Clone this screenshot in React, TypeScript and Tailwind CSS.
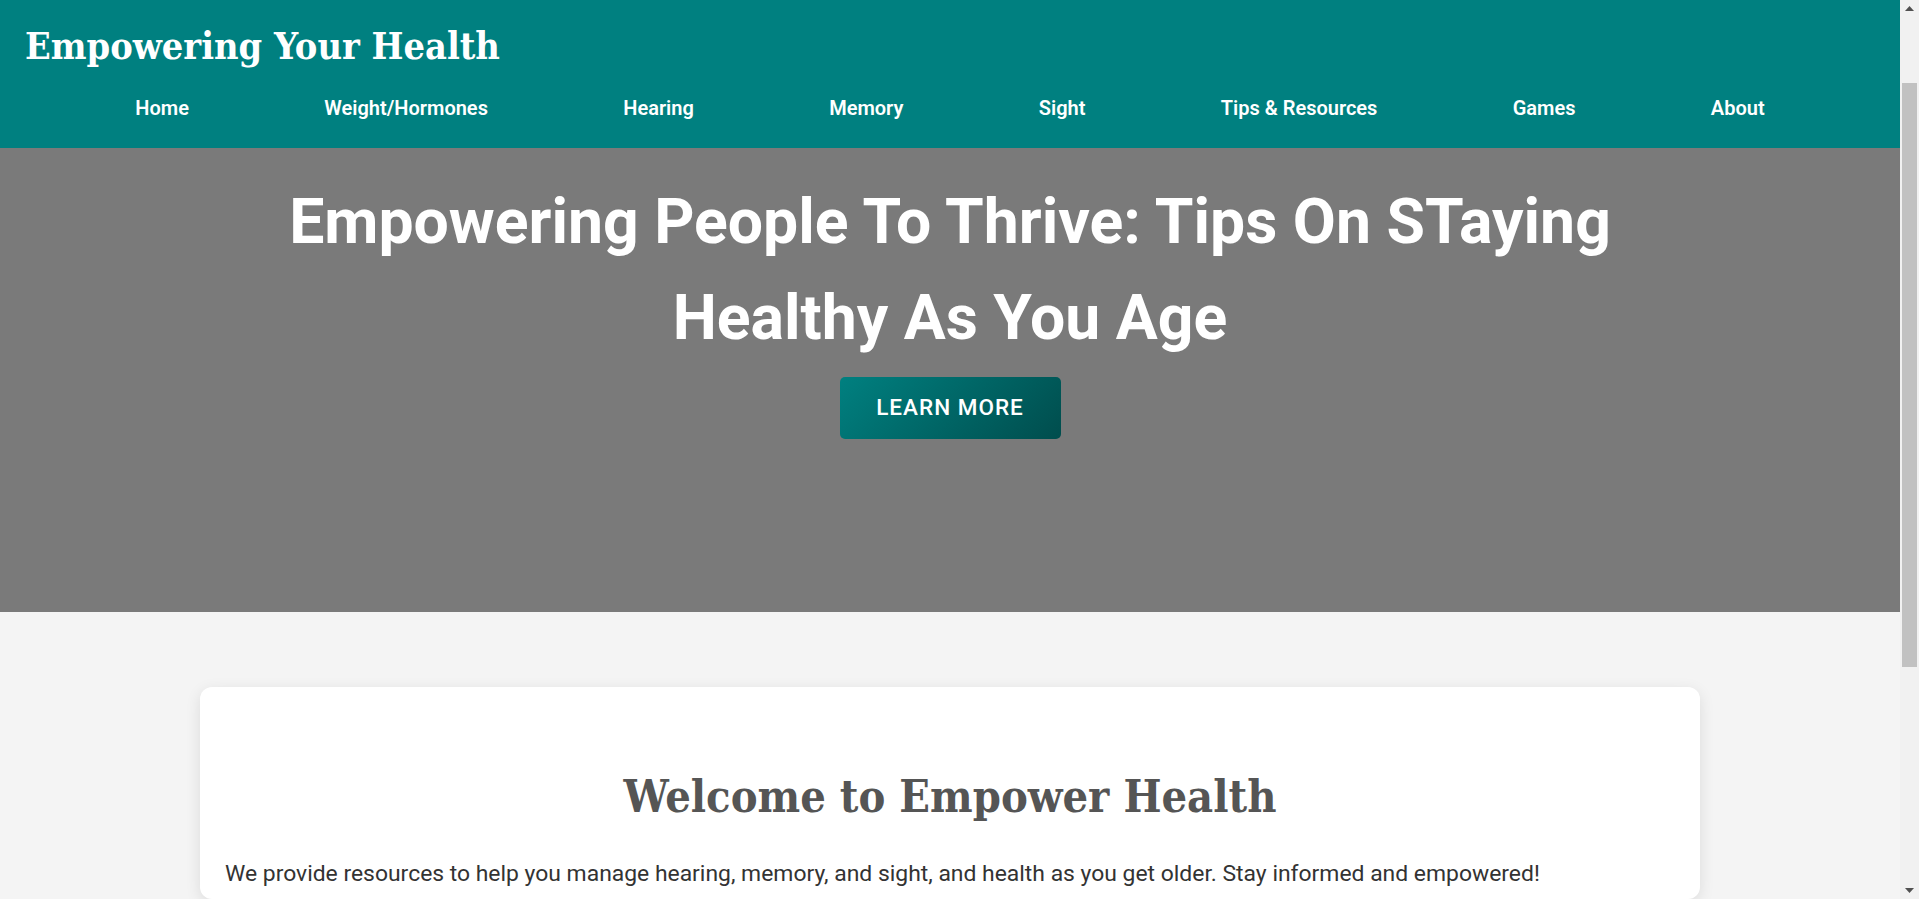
import React from "react";

const navItems = [
  "Home",
  "Weight/Hormones",
  "Hearing",
  "Memory",
  "Sight",
  "Tips & Resources",
  "Games",
  "About",
];

function Scrollbar() {
  return (
    <div className="flex h-full w-[19px] shrink-0 flex-col items-center bg-[#f1f1f1]">
      <div className="flex h-[17px] w-full items-center justify-center">
        <svg width="9" height="5" viewBox="0 0 9 5">
          <polygon points="0,5 9,5 4.5,0" fill="#505050" />
        </svg>
      </div>
      <div className="h-[66px] w-full" />
      <div className="h-[584px] w-[15px] bg-[#c1c1c1]" />
      <div className="flex-1" />
      <div className="flex h-[17px] w-full items-center justify-center">
        <svg width="9" height="5" viewBox="0 0 9 5">
          <polygon points="0,0 9,0 4.5,5" fill="#505050" />
        </svg>
      </div>
    </div>
  );
}

export default function App() {
  return (
    <div className="flex h-screen w-full overflow-hidden bg-[#f4f4f4] font-['Roboto',sans-serif]">
      <div className="flex min-w-0 flex-1 flex-col">
        <header className="flex h-[148px] shrink-0 flex-col bg-[#008080] text-white">
          <h1 className="mt-[22px] pl-[25px] font-['DejaVu_Serif_Condensed','DejaVu_Serif',serif] text-[37.6px] font-bold leading-[48px]">
            Empowering Your Health
          </h1>
          <nav className="mt-[26px] flex justify-evenly">
            {navItems.map((item) => (
              <a
                key={item}
                href="#"
                className="text-[20px] font-semibold leading-[24px] text-white"
              >
                {item}
              </a>
            ))}
          </nav>
        </header>

        <section className="flex h-[464px] shrink-0 flex-col items-center bg-[#7a7a7a]">
          <h2 className="mt-[26px] max-w-[1450px] text-center text-[62.5px] font-bold leading-[96px] text-white">
            Empowering People To Thrive: Tips On STaying Healthy As You Age
          </h2>
          <button className="mt-[11px] h-[62px] w-[221px] rounded-[5px] bg-[linear-gradient(135deg,#008080,#004d4d)] text-[22.5px] font-medium tracking-[1px] text-white">
            LEARN MORE
          </button>
        </section>

        <main className="flex flex-1 justify-center pt-[75px]">
          <div className="w-[1500px] rounded-[12px] bg-white px-[25px] pt-[82px] shadow-[0_4px_15px_rgba(0,0,0,0.1)]">
            <h2 className="text-center font-['DejaVu_Serif_Condensed','DejaVu_Serif',serif] text-[44.8px] font-bold leading-[56px] text-[#555555]">
              Welcome to Empower Health
            </h2>
            <p className="mt-[33px] text-[22.9px] leading-[32px] text-[#333333]">
              We provide resources to help you manage hearing, memory, and sight, and health as you get older. Stay informed and empowered!
            </p>
          </div>
        </main>
      </div>
      <Scrollbar />
    </div>
  );
}
